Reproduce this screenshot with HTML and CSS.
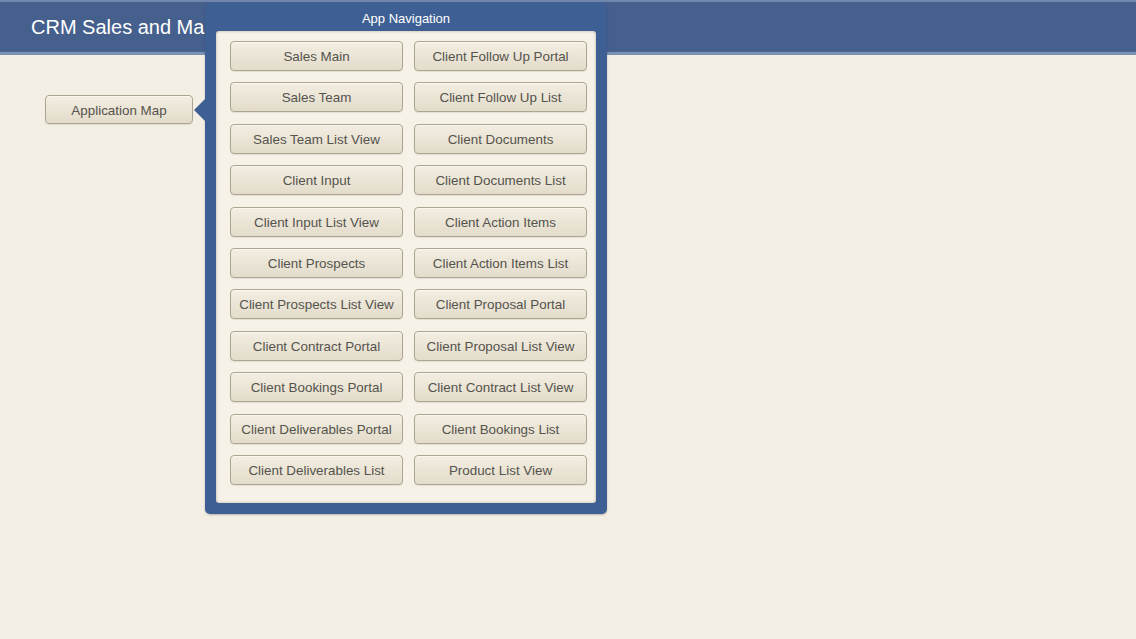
FILE: index.html
```html
<!DOCTYPE html>
<html>
<head>
<meta charset="utf-8">
<link rel="stylesheet" href="styles.css">
</head>
<body>
<header class="topbar">
  <h1 class="title">CRM Sales and Marketing</h1>
</header>
<main class="content">
  <button class="btn map-btn">Application Map</button>
</main>
<div class="popover">
  <div class="arrow"></div>
  <div class="pop-title">App Navigation</div>
  <div class="pop-panel">
    <button class="btn">Sales Main</button>
    <button class="btn">Client Follow Up Portal</button>
    <button class="btn">Sales Team</button>
    <button class="btn">Client Follow Up List</button>
    <button class="btn">Sales Team List View</button>
    <button class="btn">Client Documents</button>
    <button class="btn">Client Input</button>
    <button class="btn">Client Documents List</button>
    <button class="btn">Client Input List View</button>
    <button class="btn">Client Action Items</button>
    <button class="btn">Client Prospects</button>
    <button class="btn">Client Action Items List</button>
    <button class="btn">Client Prospects List View</button>
    <button class="btn">Client Proposal Portal</button>
    <button class="btn">Client Contract Portal</button>
    <button class="btn">Client Proposal List View</button>
    <button class="btn">Client Bookings Portal</button>
    <button class="btn">Client Contract List View</button>
    <button class="btn">Client Deliverables Portal</button>
    <button class="btn">Client Bookings List</button>
    <button class="btn">Client Deliverables List</button>
    <button class="btn">Product List View</button>
  </div>
</div>
</body>
</html>
```
FILE: styles.css
```css
* { box-sizing: border-box; }
html, body {
  margin: 0;
  padding: 0;
  width: 1136px;
  height: 639px;
  overflow: hidden;
  background: #f4efe4;
  font-family: "Liberation Sans", Arial, sans-serif;
}
.topbar {
  height: 55px;
  background: #46608e;
  border-top: 2px solid #6f86ad;
  border-bottom: 3px solid #7a90b5;
  box-shadow: inset 0 -1px 0 #4a6594;
  display: flex;
  align-items: center;
  padding-left: 31px;
  overflow: hidden;
}
.title {
  margin: 0;
  color: #ffffff;
  font-weight: normal;
  font-size: 20px;
  white-space: nowrap;
  padding-top: 1px;
}
.content {
  padding: 40px 0 0 45px;
}
.btn {
  display: flex;
  align-items: center;
  justify-content: center;
  height: 30px;
  padding: 1px 0 0 0;
  margin: 0;
  border: 1px solid #aca690;
  border-radius: 4px;
  background: linear-gradient(#f3eee2, #e3dccb);
  box-shadow: inset 0 1px 0 #fbf8f0, 0 1px 1px rgba(0,0,0,0.08);
  color: #55534d;
  font-family: "Liberation Sans", Arial, sans-serif;
  font-size: 13.4px;
  white-space: nowrap;
}
.map-btn {
  width: 148px;
  height: 29px;
}
.popover {
  position: absolute;
  left: 205px;
  top: 3px;
  width: 402px;
  height: 511px;
  background: #3e5f93;
  border-radius: 5px;
  padding: 0 11px 11px 11px;
  box-shadow: 0 1px 2px rgba(0,0,0,0.25);
}
.arrow {
  position: absolute;
  left: -11px;
  top: 95px;
  width: 0;
  height: 0;
  border-top: 12px solid transparent;
  border-bottom: 12px solid transparent;
  border-right: 12px solid #3e5f93;
}
.pop-title {
  height: 28px;
  color: #ffffff;
  font-size: 13px;
  text-align: center;
  line-height: 31px;
}
.pop-panel {
  height: 472px;
  background: #f6f2e8;
  border-radius: 3px;
  box-shadow: inset 0 0 3px rgba(60,50,30,0.35);
  padding: 10px 9px 18px 14px;
  display: grid;
  grid-template-columns: 173px 173px;
  column-gap: 11px;
  grid-auto-rows: 30px;
  row-gap: 11.4px;
}
```
